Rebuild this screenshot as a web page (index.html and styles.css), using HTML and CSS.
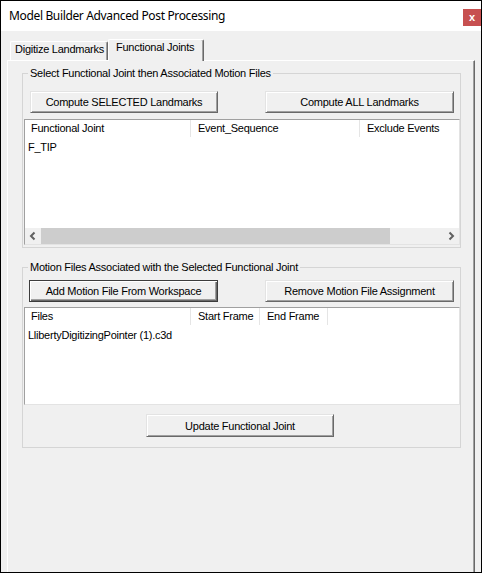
FILE: index.html
```html
<!DOCTYPE html>
<html>
<head>
<meta charset="utf-8">
<title>Model Builder Advanced Post Processing</title>
<link rel="stylesheet" href="styles.css">
</head>
<body>
<div class="window">
  <div class="titlebar">
    <span class="title">Model Builder Advanced Post Processing</span>
    <span class="close">x</span>
  </div>
  <div class="client">
    <div class="tabs">
      <div class="tab">Digitize Landmarks</div>
      <div class="tab active">Functional Joints</div>
    </div>
    <div class="panel">
      <fieldset class="group g1">
        <legend>Select Functional Joint then Associated Motion Files</legend>
        <div class="btnrow r1">
          <button class="btn">Compute SELECTED Landmarks</button>
          <button class="btn wide">Compute ALL Landmarks</button>
        </div>
        <div class="list list1">
          <div class="lhead">
            <div class="hc c1">Functional Joint</div>
            <div class="hc c2">Event_Sequence</div>
            <div class="hc cfill">Exclude Events</div>
          </div>
          <div class="lbody">
            <div class="row">F_TIP</div>
          </div>
          <div class="hscroll">
            <div class="arrow"><svg width="16" height="16" viewBox="0 0 16 16"><polyline points="9.5,4.5 6,8 9.5,11.5" fill="none" stroke="#606060" stroke-width="2"/></svg></div>
            <div class="track"><div class="thumb"></div></div>
            <div class="arrow"><svg width="16" height="16" viewBox="0 0 16 16"><polyline points="6.5,4.5 10,8 6.5,11.5" fill="none" stroke="#606060" stroke-width="2"/></svg></div>
          </div>
        </div>
      </fieldset>
      <fieldset class="group g2">
        <legend>Motion Files Associated with the Selected Functional Joint</legend>
        <div class="btnrow r2">
          <button class="btn default">Add Motion File From Workspace</button>
          <button class="btn wide">Remove Motion File Assignment</button>
        </div>
        <div class="list list2">
          <div class="lhead">
            <div class="hc c1">Files</div>
            <div class="hc c3">Start Frame</div>
            <div class="hc c4">End Frame</div>
            <div class="hc cblank"></div>
          </div>
          <div class="lbody">
            <div class="row">LlibertyDigitizingPointer (1).c3d</div>
          </div>
        </div>
        <button class="btn update">Update Functional Joint</button>
      </fieldset>
    </div>
  </div>
</div>
</body>
</html>
```
FILE: styles.css
```css
html, body {
  margin: 0;
  padding: 0;
  background: #f0f0f0;
}

.window {
  width: 482px;
  height: 573px;
  box-sizing: border-box;
  border: 1px solid #000;
  background: #f0f0f0;
  overflow: hidden;
  display: flex;
  flex-direction: column;
  font-family: "Liberation Sans", Arial, sans-serif;
  font-size: 11px;
  letter-spacing: -0.25px;
  color: #000;
}

.titlebar {
  flex: none;
  height: 30px;
  background: #fff;
  display: flex;
  align-items: flex-start;
  justify-content: space-between;
}

.title {
  margin: 7px 0 0 8px;
  font-family: "Noto Sans", "Open Sans", sans-serif;
  font-size: 12px;
  line-height: 16px;
  letter-spacing: -0.35px;
  color: #000;
}

.close {
  width: 18px;
  height: 17px;
  margin-top: 8px;
  background: #c75050;
  color: #fff;
  font-family: "Liberation Sans", Arial, sans-serif;
  font-weight: bold;
  font-size: 11px;
  letter-spacing: 0;
  line-height: 16px;
  text-align: center;
}

.client {
  flex: 1;
  display: flex;
  flex-direction: column;
  padding: 8px 6px 0 6px;
  min-height: 0;
}

.tabs {
  flex: none;
  height: 21px;
  display: flex;
  align-items: flex-end;
  padding-left: 3px;
}

.tab {
  box-sizing: border-box;
  width: 98px;
  height: 19px;
  padding-left: 4px;
  line-height: 15px;
  border-top: 1px solid #fff;
  border-left: 1px solid #fff;
  border-right: 1px solid #696969;
  box-shadow: inset -1px 0 0 #a0a0a0;
  border-radius: 2px 2px 0 0;
  background: #f0f0f0;
  white-space: nowrap;
}

.tab.active {
  width: 96px;
  height: 22px;
  margin-bottom: -1px;
  padding-left: 7px;
  line-height: 15px;
  position: relative;
  z-index: 1;
}

.panel {
  flex: 1;
  width: 468px;
  box-sizing: border-box;
  border-top: 1px solid #fff;
  border-left: 1px solid #fff;
  border-right: 1px solid #696969;
  box-shadow: inset -1px 0 0 #a0a0a0;
  padding: 6px 0 0 14px;
}

.group {
  margin: 0;
  padding: 0;
  width: 439px;
  box-sizing: border-box;
  min-width: 0;
  border: 1px solid #d5d5d5;
}

.group legend {
  margin-left: 5px;
  padding: 0 2px;
  line-height: 13px;
  font-size: 11px;
}

.g2 {
  margin-top: 13px;
}

.btnrow {
  display: flex;
  justify-content: space-between;
  padding: 0 6px 0 7px;
}

.r1 {
  margin-top: 11px;
}

.r2 {
  margin-top: 6px;
}

.btn {
  box-sizing: border-box;
  width: 188px;
  height: 22px;
  margin: 0;
  padding: 0;
  font: inherit;
  letter-spacing: inherit;
  color: #000;
  background: #f0f0f0;
  border: 1px solid;
  border-color: #e3e3e3 #696969 #696969 #e3e3e3;
  box-shadow: inset 1px 1px 0 #fff, inset -1px -1px 0 #a0a0a0;
}

.btn.wide {
  width: 189px;
}

.btn.default {
  width: 189px;
  margin-left: -1px;
  border-color: #3c3c3c;
  box-shadow: inset 1px 1px 0 #fff, inset -1px -1px 0 #696969, inset -2px -2px 0 #a0a0a0;
}

.btn.update {
  display: block;
  height: 23px;
  margin: 9px 0 10px 123px;
}

.list {
  box-sizing: border-box;
  width: 436px;
  margin-left: 1px;
  border: 1px solid;
  border-color: #a0a0a0 #e3e3e3 #e3e3e3 #a0a0a0;
  background: #fff;
  display: flex;
  flex-direction: column;
}

.list1 {
  height: 126px;
  margin-top: 6px;
  margin-bottom: 2px;
}

.list2 {
  height: 98px;
  margin-top: 5px;
}

.lhead {
  flex: none;
  height: 17px;
  display: flex;
  background: #fff;
}

.hc {
  box-sizing: border-box;
  height: 17px;
  padding: 1px 0 0 7px;
  line-height: 15px;
  border-right: 1px solid #e5e5e5;
  white-space: nowrap;
  overflow: hidden;
}

.hc.c1 {
  width: 166px;
  padding-left: 6px;
}

.hc.c2 {
  width: 169px;
}

.hc.c3 {
  width: 69px;
}

.hc.c4 {
  width: 68px;
}

.hc.cfill {
  flex: 1;
  border-right: none;
}

.hc.cblank {
  flex: 1;
  border-right: none;
}

.lbody {
  flex: 1;
  min-height: 0;
}

.row {
  padding: 4px 0 0 3px;
  line-height: 13px;
  white-space: nowrap;
}

.hscroll {
  flex: none;
  height: 16px;
  display: flex;
  background: #f0f0f0;
}

.arrow {
  width: 16px;
  height: 16px;
  flex: none;
}

.arrow svg {
  display: block;
}

.track {
  flex: 1;
  display: flex;
}

.thumb {
  width: 349px;
  height: 16px;
  background: #cdcdcd;
}
```
